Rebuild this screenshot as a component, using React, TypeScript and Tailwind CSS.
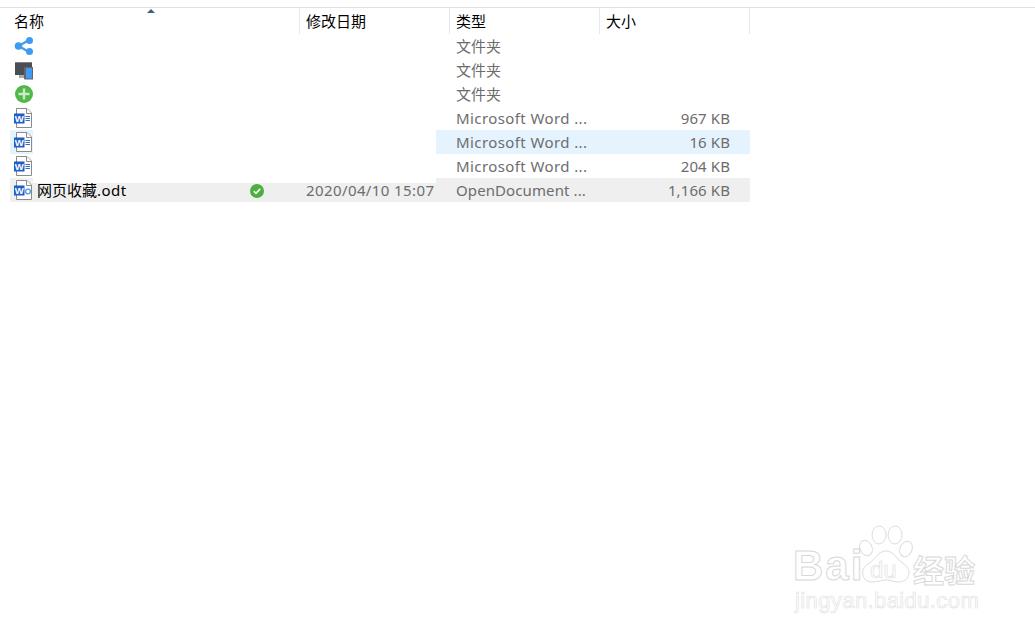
const font = "[font-family:'Noto_Sans','Noto_Sans_CJK_SC',sans-serif]"

function ShareIcon() {
  return (
    <svg width="24" height="24" viewBox="0 0 24 24">
      <path d="M19 6 L8.5 12 L19 18" fill="none" stroke="#3f9bf0" strokeWidth="2.2" />
      <circle cx="19.5" cy="6.5" r="3.5" fill="#3f9bf0" />
      <circle cx="8.5" cy="12" r="3.8" fill="#3f9bf0" />
      <circle cx="19.5" cy="17.5" r="3.5" fill="#3f9bf0" />
    </svg>
  )
}

function DevicesIcon() {
  return (
    <svg width="24" height="24" viewBox="0 0 24 24">
      <rect x="5" y="4" width="17" height="13" fill="#4a4f55" />
      <rect x="5" y="4" width="17" height="1" fill="#808080" />
      <rect x="9" y="17" width="6" height="3" fill="#a8a8a8" />
      <rect x="14" y="9" width="9.5" height="12.5" rx="1" fill="#62666b" />
      <rect x="16" y="10" width="6" height="10.5" fill="#3f9bf0" />
    </svg>
  )
}

function PlusIcon() {
  return (
    <svg width="24" height="24" viewBox="0 0 24 24">
      <circle cx="14" cy="12" r="9" fill="#52b84a" />
      <path d="M14 6.5 V17.5 M8.5 12 H19.5" stroke="#cdeac8" strokeWidth="2.4" />
    </svg>
  )
}

function WordIcon({ sync }: { sync?: boolean }) {
  return (
    <svg width="24" height="24" viewBox="0 0 24 24">
      <path d="M6.5 2.5 H17 L21.5 7 V21.5 H6.5 Z" fill="#fff" stroke="#8a8a8a" />
      <path d="M16.5 2.5 V7.5 H21.5" fill="#fff" stroke="#8a8a8a" />
      {sync ? (
        <circle cx="18" cy="13.5" r="2.4" fill="none" stroke="#4a9be8" strokeWidth="1.3" />
      ) : (
        <path d="M15.5 10.5 H20 M15.5 12.5 H20 M15.5 14.5 H20" stroke="#2b6fd0" strokeWidth="1" />
      )}
      <rect x="4" y="7.5" width="10.5" height="10" fill="#1f5fc4" />
      <text x="9.2" y="16" textAnchor="middle" fontSize="9.5" fontWeight="700" fill="#fff" fontFamily="Liberation Sans">W</text>
    </svg>
  )
}

const rows = [
  { icon: <ShareIcon />, type: '文件夹' },
  { icon: <DevicesIcon />, type: '文件夹' },
  { icon: <PlusIcon />, type: '文件夹' },
  { icon: <WordIcon />, type: 'Microsoft Word ...', size: '967 KB' },
  { icon: <WordIcon />, type: 'Microsoft Word ...', size: '16 KB', selected: true },
  { icon: <WordIcon />, type: 'Microsoft Word ...', size: '204 KB' },
]

function Watermark() {
  const outline = "text-white [font-family:'Liberation_Sans',sans-serif]"
  return (
    <div className="absolute left-[790px] top-[522px] w-[195px] h-[95px]">
      <svg className="absolute left-[68px] top-0" width="70" height="66" viewBox="0 0 70 66">
        <g fill="#fff" stroke="#dcdcdc" strokeWidth="1">
          <ellipse cx="8" cy="26" rx="6" ry="8" transform="rotate(-25 8 26)" />
          <ellipse cx="21" cy="13" rx="7" ry="9" />
          <ellipse cx="37" cy="13" rx="7" ry="9" />
          <ellipse cx="48" cy="27" rx="6" ry="8" transform="rotate(25 48 27)" />
          <path d="M28 29 C36 29 38 37 46 42 C55 48 51 60 41 60 C35 60 33 58 28 58 C23 58 20 60 14 60 C4 60 1 48 10 42 C18 37 20 29 28 29 Z" />
        </g>
      </svg>
      <span className={`absolute left-[3px] top-[20px] text-[42px] leading-[48px] font-bold tracking-[2px] [-webkit-text-stroke:1px_#d8d8d8] ${outline}`}>Bai</span>
      <span className={`absolute left-[80px] top-[34px] text-[24px] leading-[28px] [-webkit-text-stroke:0.6px_#dcdcdc] ${outline}`}>du</span>
      <span className={`absolute left-[123px] top-[27px] text-[31px] leading-[40px] font-bold [-webkit-text-stroke:1px_#d8d8d8] ${outline} [font-family:'Noto_Sans_CJK_SC',sans-serif]`}>经验</span>
      <span className={`absolute left-[5px] top-[66px] text-[22px] leading-[26px] tracking-[0.4px] [-webkit-text-stroke:0.6px_#e0e0e0] ${outline}`}>jingyan.baidu.com</span>
    </div>
  )
}

export default function App() {
  return (
    <div className={`relative w-[1035px] h-[636px] bg-white overflow-hidden pt-[7px] text-[15px] ${font}`}>
      <div className="flex h-[27px] border-t border-[#e0e0e0] text-black">
        <div className="w-[300px] pl-[14px] border-r border-[#e8e8e8] leading-[26px]">名称</div>
        <div className="w-[150px] pl-[6px] border-r border-[#e8e8e8] leading-[26px]">修改日期</div>
        <div className="w-[150px] pl-[6px] border-r border-[#e8e8e8] leading-[26px]">类型</div>
        <div className="w-[150px] pl-[6px] border-r border-[#e8e8e8] leading-[26px]">大小</div>
      </div>
      {/* sort arrow */}
      <div className="absolute left-[147px] top-[9px] w-0 h-0 border-x-[4px] border-x-transparent border-b-[4px] border-b-[#3f5f78]" />

      <div className="text-[#6d6d6d]">
        {rows.map((row, i) => (
          <div key={i} className="flex h-6 pl-[10px]">
            <div className={`w-[23px] h-6 overflow-hidden ${row.selected ? 'bg-[#e5f3ff]' : ''}`}>{row.icon}</div>
            <div className="w-[403px]" />
            <div className={`flex w-[314px] h-6 leading-6 ${row.selected ? 'bg-[#e5f3ff]' : ''}`}>
              <div className={`w-[164px] pl-[20px] whitespace-nowrap ${row.size ? 'tracking-[0.4px]' : ''}`}>{row.type}</div>
              <div className="w-[150px] pr-[20px] text-right tracking-[0.1px]">{row.size}</div>
            </div>
          </div>
        ))}
        <div className="flex h-6 pl-[10px]">
          <div className="w-[23px] h-6 overflow-hidden bg-[#efefef]"><WordIcon sync /></div>
          <div className="flex items-center w-[403px] h-[19px] mt-[5px] pb-[4px] bg-[#efefef] leading-[15px]">
            <div className="w-[213px] pl-[4px] text-black whitespace-nowrap">
              网页收藏<span className="tracking-[0.5px]">.odt</span>
            </div>
            <div className="w-[60px] pl-[3px]">
              <svg width="16" height="16" viewBox="0 0 16 16">
                <circle cx="8" cy="8" r="7" fill="#4caf3f" />
                <path d="M4.8 8.2 L7 10.3 L11.2 5.9" fill="none" stroke="#fff" strokeWidth="1.6" />
              </svg>
            </div>
            <div className="whitespace-nowrap tracking-[0.4px]">2020/04/10 15:07</div>
          </div>
          <div className="flex w-[314px] h-6 leading-6 bg-[#efefef]">
            <div className="w-[164px] pl-[20px] whitespace-nowrap tracking-[0.1px]">OpenDocument ...</div>
            <div className="w-[150px] pr-[20px] text-right tracking-[0.1px]">1,166 KB</div>
          </div>
        </div>
      </div>

      <Watermark />
    </div>
  )
}
